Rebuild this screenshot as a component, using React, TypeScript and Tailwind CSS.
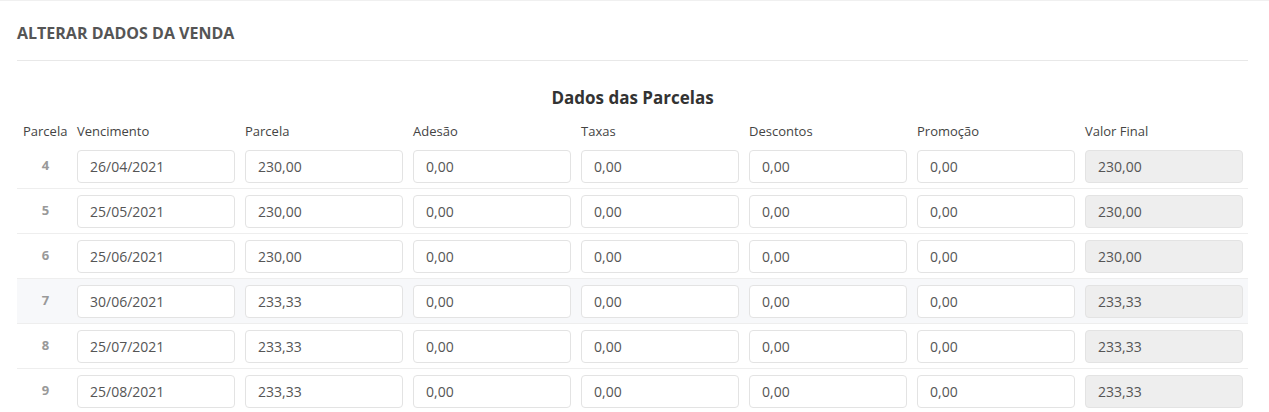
const rows = [
  { n: 4, venc: '26/04/2021', parcela: '230,00', final: '230,00' },
  { n: 5, venc: '25/05/2021', parcela: '230,00', final: '230,00' },
  { n: 6, venc: '25/06/2021', parcela: '230,00', final: '230,00' },
  { n: 7, venc: '30/06/2021', parcela: '233,33', final: '233,33', hover: true },
  { n: 8, venc: '25/07/2021', parcela: '233,33', final: '233,33' },
  { n: 9, venc: '25/08/2021', parcela: '233,33', final: '233,33' },
];

const headers = ['Vencimento', 'Parcela', 'Adesão', 'Taxas', 'Descontos', 'Promoção', 'Valor Final'];

function Field({ value, readOnly }: { value: string; readOnly?: boolean }) {
  return (
    <div className="px-[5px]">
      <input
        readOnly
        value={value}
        className={`w-full h-[33px] rounded-[4px] border border-[#e3e3e3] px-[12px] text-[14px] text-[#555] outline-none ${
          readOnly ? 'bg-[#eeeeee]' : 'bg-white'
        }`}
      />
    </div>
  );
}

export default function App() {
  return (
    <div className="w-[1269px] h-[412px] overflow-hidden bg-white border-t border-[#f0f0f0] font-['Open_Sans',sans-serif]">
      <div className="px-[17px] pr-[21px]">
        {/* Header */}
        <div className="h-[60px] flex items-center border-b border-[#e8e8e8]">
          <h2 className="text-[16px] font-bold text-[#555] pt-[5px]">ALTERAR DADOS DA VENDA</h2>
        </div>

        <h3 className="text-center text-[17px] font-bold text-[#333] mt-[26px] leading-[22px]">Dados das Parcelas</h3>

        {/* Column labels */}
        <div className="grid grid-cols-[55px_repeat(7,168px)] mt-[13px] text-[13px] text-[#444] leading-[18px]">
          <div className="pl-[6px]">Parcela</div>
          {headers.map((h) => (
            <div key={h} className="px-[5px]">{h}</div>
          ))}
        </div>

        {/* Rows */}
        <div className="mt-[4px]">
          {rows.map((r) => (
            <div
              key={r.n}
              className={`grid grid-cols-[55px_repeat(7,168px)] items-center h-[45px] border-b border-[#eeeeee] ${
                r.hover ? 'bg-[#f7f8fa]' : ''
              }`}
            >
              <div className="text-center text-[13px] font-bold text-[#999] pl-[2px]">{r.n}</div>
              <Field value={r.venc} />
              <Field value={r.parcela} />
              <Field value="0,00" />
              <Field value="0,00" />
              <Field value="0,00" />
              <Field value="0,00" />
              <Field value={r.final} readOnly />
            </div>
          ))}
        </div>
      </div>
    </div>
  );
}
